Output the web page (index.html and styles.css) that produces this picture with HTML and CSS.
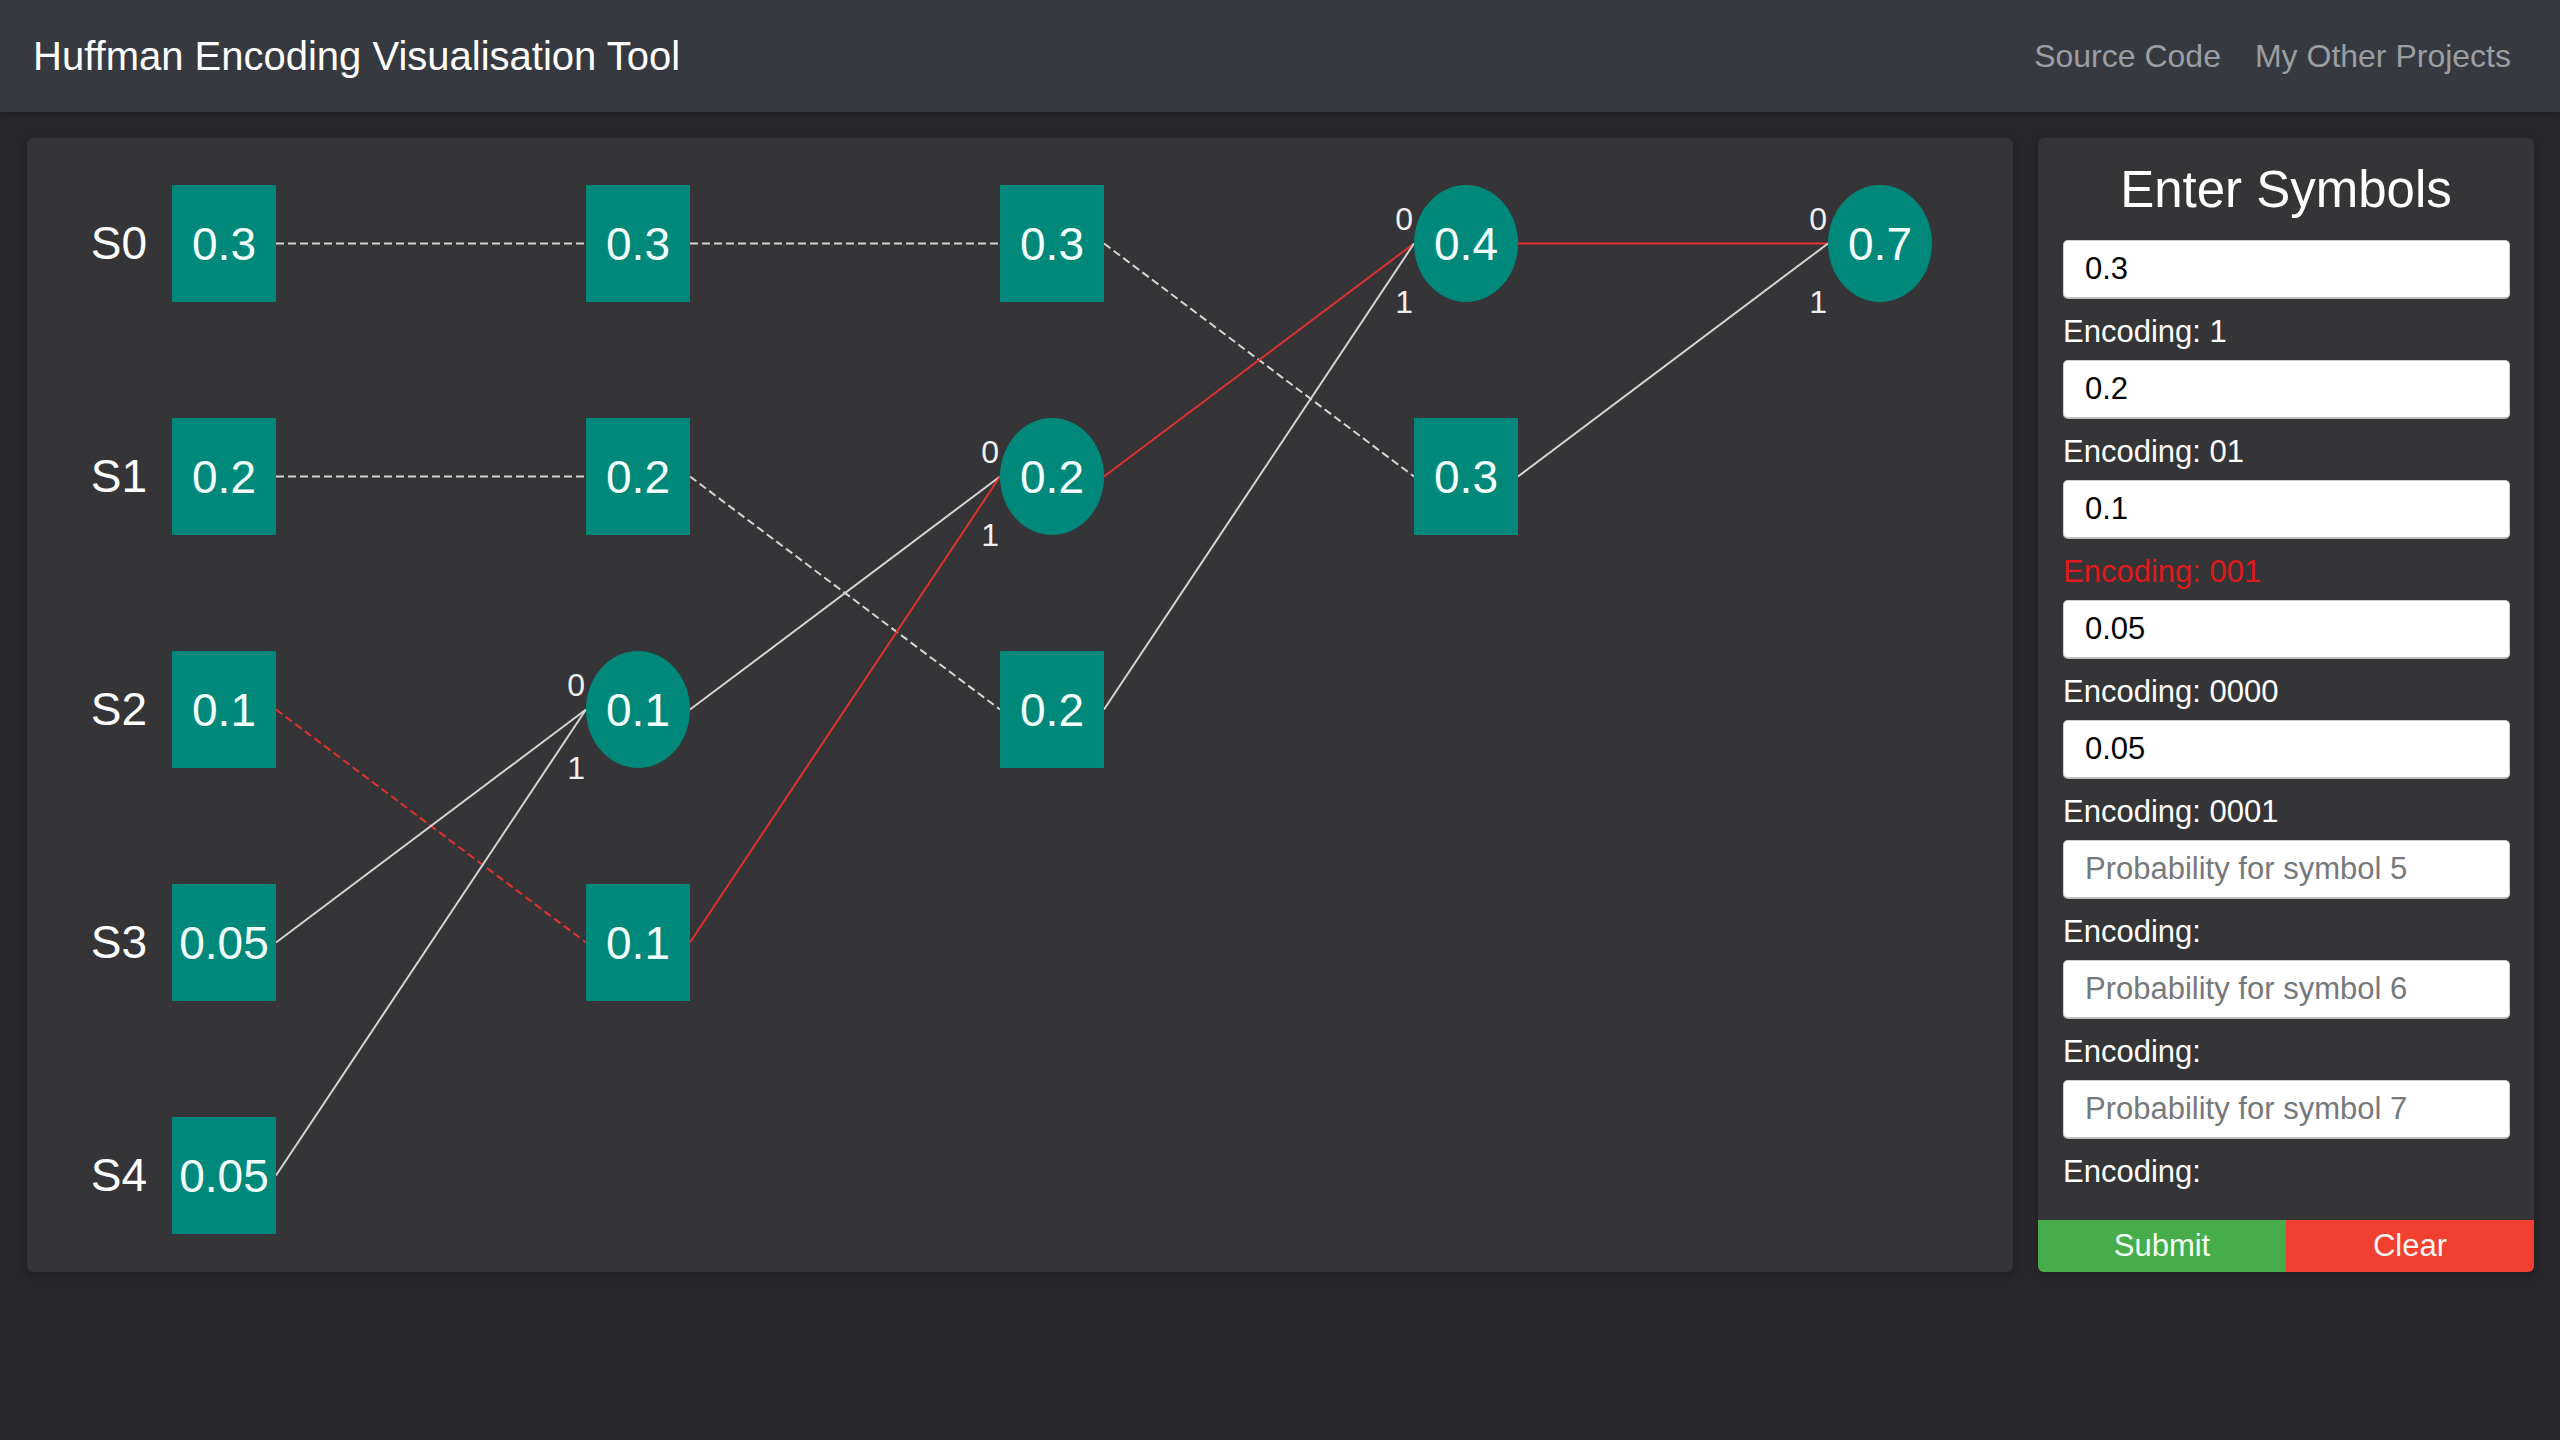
FILE: index.html
```html
<!DOCTYPE html>
<html lang="en">
<head>
<meta charset="utf-8">
<title>Huffman Encoding Visualisation Tool</title>
<link rel="stylesheet" href="styles.css">
</head>
<body>
<header class="topbar">
  <div class="brand">Huffman Encoding Visualisation Tool</div>
  <nav class="nav">
    <a class="nav-link" href="#">Source Code</a>
    <a class="nav-link" href="#">My Other Projects</a>
  </nav>
</header>
<main class="layout">
  <section class="canvas-card">
    <svg class="tree" width="1986" height="1132" viewBox="0 0 1986 1132" xmlns="http://www.w3.org/2000/svg">
      <g class="edges">
        <line class="e dash" x1="249" y1="105.5" x2="559" y2="105.5"/>
        <line class="e dash" x1="663" y1="105.5" x2="973" y2="105.5"/>
        <line class="e dash" x1="249" y1="338.5" x2="559" y2="338.5"/>
        <line class="e dash" x1="663" y1="338.5" x2="973" y2="571.5"/>
        <line class="e dash" x1="1077" y1="105.5" x2="1387" y2="338.5"/>
        <line class="e dash red" x1="249" y1="571.5" x2="559" y2="804.5"/>
        <line class="e" x1="249" y1="804.5" x2="559" y2="571.5"/>
        <line class="e" x1="249" y1="1037.5" x2="559" y2="571.5"/>
        <line class="e" x1="663" y1="571.5" x2="973" y2="338.5"/>
        <line class="e red" x1="663" y1="804.5" x2="973" y2="338.5"/>
        <line class="e red" x1="1077" y1="338.5" x2="1387" y2="105.5"/>
        <line class="e" x1="1077" y1="571.5" x2="1387" y2="105.5"/>
        <line class="e red" x1="1491" y1="105.5" x2="1801" y2="105.5"/>
        <line class="e" x1="1491" y1="338.5" x2="1801" y2="105.5"/>
      </g>
      <g class="sym">
        <text x="120" y="121">S0</text>
        <text x="120" y="354">S1</text>
        <text x="120" y="587">S2</text>
        <text x="120" y="820">S3</text>
        <text x="120" y="1053">S4</text>
      </g>
      <g class="nodes">
        <rect x="145" y="47" width="104" height="117"/>
        <rect x="145" y="280" width="104" height="117"/>
        <rect x="145" y="513" width="104" height="117"/>
        <rect x="145" y="746" width="104" height="117"/>
        <rect x="145" y="979" width="104" height="117"/>
        <rect x="559" y="47" width="104" height="117"/>
        <rect x="559" y="280" width="104" height="117"/>
        <ellipse cx="611" cy="571.5" rx="52" ry="58.5"/>
        <rect x="559" y="746" width="104" height="117"/>
        <rect x="973" y="47" width="104" height="117"/>
        <ellipse cx="1025" cy="338.5" rx="52" ry="58.5"/>
        <rect x="973" y="513" width="104" height="117"/>
        <ellipse cx="1439" cy="105.5" rx="52" ry="58.5"/>
        <rect x="1387" y="280" width="104" height="117"/>
        <ellipse cx="1853" cy="105.5" rx="52" ry="58.5"/>
      </g>
      <g class="vals">
        <text x="197" y="121.5">0.3</text>
        <text x="197" y="354.5">0.2</text>
        <text x="197" y="587.5">0.1</text>
        <text x="197" y="820.5">0.05</text>
        <text x="197" y="1053.5">0.05</text>
        <text x="611" y="121.5">0.3</text>
        <text x="611" y="354.5">0.2</text>
        <text x="611" y="587.5">0.1</text>
        <text x="611" y="820.5">0.1</text>
        <text x="1025" y="121.5">0.3</text>
        <text x="1025" y="354.5">0.2</text>
        <text x="1025" y="587.5">0.2</text>
        <text x="1439" y="121.5">0.4</text>
        <text x="1439" y="354.5">0.3</text>
        <text x="1853" y="121.5">0.7</text>
      </g>
      <g class="bits">
        <text x="558" y="557.5">0</text>
        <text x="558" y="640.5">1</text>
        <text x="972" y="324.5">0</text>
        <text x="972" y="407.5">1</text>
        <text x="1386" y="91.5">0</text>
        <text x="1386" y="174.5">1</text>
        <text x="1800" y="91.5">0</text>
        <text x="1800" y="174.5">1</text>
      </g>
    </svg>
  </section>
  <aside class="panel">
    <h2 class="panel-title">Enter Symbols</h2>
    <div class="fields">
      <input class="prob" type="text" value="0.3" placeholder="Probability for symbol 0">
      <div class="enc">Encoding: 1</div>
      <input class="prob" type="text" value="0.2" placeholder="Probability for symbol 1">
      <div class="enc">Encoding: 01</div>
      <input class="prob" type="text" value="0.1" placeholder="Probability for symbol 2">
      <div class="enc enc-active">Encoding: 001</div>
      <input class="prob" type="text" value="0.05" placeholder="Probability for symbol 3">
      <div class="enc">Encoding: 0000</div>
      <input class="prob" type="text" value="0.05" placeholder="Probability for symbol 4">
      <div class="enc">Encoding: 0001</div>
      <input class="prob" type="text" value="" placeholder="Probability for symbol 5">
      <div class="enc">Encoding:</div>
      <input class="prob" type="text" value="" placeholder="Probability for symbol 6">
      <div class="enc">Encoding:</div>
      <input class="prob" type="text" value="" placeholder="Probability for symbol 7">
      <div class="enc">Encoding:</div>
    </div>
    <div class="actions">
      <button class="btn btn-submit" type="button">Submit</button>
      <button class="btn btn-clear" type="button">Clear</button>
    </div>
  </aside>
</main>
</body>
</html>
```

FILE: styles.css
```css
html, body {
  margin: 0;
  padding: 0;
}

body {
  background: #28272a;
  font-family: "Liberation Sans", Arial, Helvetica, sans-serif;
  color: #ffffff;
  min-height: 1440px;
}

.topbar {
  height: 112px;
  background: #363a40;
  display: flex;
  align-items: center;
  justify-content: space-between;
  padding: 0 49px 0 33px;
  box-sizing: border-box;
  box-shadow: 0 2px 6px rgba(0, 0, 0, 0.25);
}

.brand {
  font-size: 40px;
  color: #ffffff;
}

.nav {
  display: flex;
  gap: 34px;
}

.nav-link {
  font-size: 32px;
  color: #9b9ea2;
  text-decoration: none;
}

.layout {
  display: flex;
  align-items: stretch;
  gap: 25px;
  padding: 26px 26px 0 27px;
}

.canvas-card {
  flex: 1;
  background: #353437;
  border-radius: 6px;
  overflow: hidden;
  box-shadow: 0 2px 8px rgba(0, 0, 0, 0.25);
}

.tree {
  display: block;
}

.e {
  stroke: #d4d4d4;
  stroke-width: 2;
}

.e.dash {
  stroke-dasharray: 8 4;
}

.e.red {
  stroke: #e2312f;
}

.nodes rect,
.nodes ellipse {
  fill: #00897b;
}

.sym text {
  font-family: "Liberation Sans", Arial, sans-serif;
  font-size: 46px;
  fill: #ffffff;
  text-anchor: end;
}

.vals text {
  font-family: "Liberation Sans", Arial, sans-serif;
  font-size: 46px;
  fill: #f2fffd;
  text-anchor: middle;
}

.bits text {
  font-family: "Liberation Sans", Arial, sans-serif;
  font-size: 32px;
  fill: #f0f0f0;
  text-anchor: end;
}

.panel {
  width: 496px;
  flex: none;
  background: #353437;
  border-radius: 6px;
  overflow: hidden;
  display: flex;
  flex-direction: column;
  box-shadow: 0 2px 8px rgba(0, 0, 0, 0.25);
}

.panel-title {
  margin: 26px 0 0;
  font-size: 51px;
  line-height: 51px;
  font-weight: normal;
  text-align: center;
  color: #ffffff;
}

.fields {
  padding: 0 24px 0 25px;
  display: flex;
  flex-direction: column;
}

.prob {
  display: block;
  width: 100%;
  height: 59px;
  box-sizing: border-box;
  margin: 10px 0 0;
  padding: 0 21px;
  border: 1px solid #d0d0d0;
  border-bottom: 2px solid #bdbdbd;
  border-radius: 5px;
  background: #ffffff;
  font-family: "Liberation Sans", Arial, sans-serif;
  font-size: 31px;
  color: #000000;
  outline: none;
}

.prob:first-child {
  margin-top: 25px;
}

.prob::placeholder {
  color: #76797c;
}

.enc {
  margin-top: 14px;
  font-size: 31px;
  line-height: 37px;
  color: #ffffff;
}

.enc-active {
  color: #df1a1d;
}

.actions {
  display: flex;
  margin-top: 30px;
}

.btn {
  flex: 1;
  height: 52px;
  border: 0;
  padding: 0;
  font-family: "Liberation Sans", Arial, sans-serif;
  font-size: 31px;
  color: #f4fff4;
  cursor: pointer;
}

.btn-submit {
  background: #47ad4b;
}

.btn-clear {
  background: #f1402f;
  color: #fff6f5;
}
```
